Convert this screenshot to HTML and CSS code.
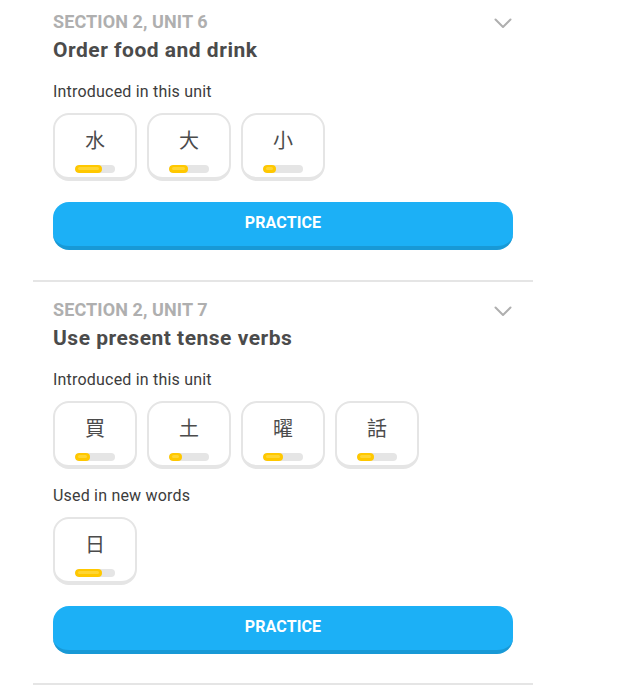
FILE: index.html
```html
<!DOCTYPE html>
<html lang="en">
<head>
  <meta charset="UTF-8" />
  <meta name="viewport" content="width=device-width, initial-scale=1.0" />
  <title>Guidebook</title>
  <link rel="stylesheet" href="styles.css">
</head>
<body>
  <main class="units">
    <section class="unit">
      <div class="unit-head">
        <div>
          <div class="unit-label">SECTION 2, UNIT 6</div>
          <h2 class="unit-title">Order food and drink</h2>
        </div>
        <svg class="chevron" width="18" height="12" viewBox="0 0 18 12">
          <path d="M1.5 1.5 L9 9 L16.5 1.5" fill="none" stroke="#afafaf" stroke-width="2" stroke-linecap="round" stroke-linejoin="round"/>
        </svg>
      </div>

      <p class="group-title">Introduced in this unit</p>
      <div class="tiles">
        <div class="tile">
          <span class="char">水</span>
          <div class="bar"><div class="fill" style="width: 67.5%;"></div></div>
        </div>
        <div class="tile">
          <span class="char">大</span>
          <div class="bar"><div class="fill" style="width: 47.5%;"></div></div>
        </div>
        <div class="tile">
          <span class="char">小</span>
          <div class="bar"><div class="fill" style="width: 32.5%;"></div></div>
        </div>
      </div>

      <button class="practice-btn">PRACTICE</button>
    </section>

    <section class="unit">
      <div class="unit-head">
        <div>
          <div class="unit-label">SECTION 2, UNIT 7</div>
          <h2 class="unit-title">Use present tense verbs</h2>
        </div>
        <svg class="chevron" width="18" height="12" viewBox="0 0 18 12">
          <path d="M1.5 1.5 L9 9 L16.5 1.5" fill="none" stroke="#afafaf" stroke-width="2" stroke-linecap="round" stroke-linejoin="round"/>
        </svg>
      </div>

      <p class="group-title">Introduced in this unit</p>
      <div class="tiles">
        <div class="tile">
          <span class="char">買</span>
          <div class="bar"><div class="fill" style="width: 37.5%;"></div></div>
        </div>
        <div class="tile">
          <span class="char">土</span>
          <div class="bar"><div class="fill" style="width: 32.5%;"></div></div>
        </div>
        <div class="tile">
          <span class="char">曜</span>
          <div class="bar"><div class="fill" style="width: 50%;"></div></div>
        </div>
        <div class="tile">
          <span class="char">話</span>
          <div class="bar"><div class="fill" style="width: 42.5%;"></div></div>
        </div>
      </div>

      <p class="group-title group-title-next">Used in new words</p>
      <div class="tiles">
        <div class="tile">
          <span class="char">日</span>
          <div class="bar"><div class="fill" style="width: 67.5%;"></div></div>
        </div>
      </div>

      <button class="practice-btn">PRACTICE</button>
    </section>
  </main>
</body>
</html>
```

FILE: styles.css
```css
body {
  margin: 0;
  padding: 0;
  background: #fff;
  font-family: Roboto, "Noto Sans CJK TC", sans-serif;
  color: #4b4b4b;
}
.units {
  width: 500px;
  margin: -6px 0 0 33px;
}
.unit {
  padding: 17px 20px 30px;
  border-bottom: 2px solid #e5e5e5;
}
.unit + .unit {
  padding-bottom: 29px;
}
.unit-head {
  display: flex;
  justify-content: space-between;
  align-items: flex-start;
}
.unit-label {
  font-size: 18px;
  line-height: 22px;
  font-weight: 700;
  letter-spacing: 0.1px;
  color: #afafaf;
}
.unit-title {
  margin: 4px 0 0;
  font-size: 21px;
  line-height: 26px;
  font-weight: 700;
  letter-spacing: 0.5px;
  color: #4b4b4b;
}
.chevron {
  margin: 7px 1px 0 0;
}
.group-title {
  margin: 19px 0 0;
  font-size: 16px;
  line-height: 20px;
  letter-spacing: 0.2px;
  color: #3c3c3c;
}
.group-title-next {
  margin-top: 17px;
}
.tiles {
  display: flex;
  gap: 10px;
  margin-top: 11px;
}
.tile {
  width: 80px;
  height: 62px;
  border: 2px solid #e5e5e5;
  border-bottom-width: 4px;
  border-radius: 16px;
  display: flex;
  flex-direction: column;
  align-items: center;
  box-sizing: content-box;
}
.char {
  margin-top: 13px;
  font-family: "Noto Sans CJK TC", sans-serif;
  font-size: 20px;
  line-height: 24px;
  color: #4b4b4b;
}
.bar {
  margin-top: 13px;
  width: 40px;
  height: 8px;
  border-radius: 4px;
  background: #e5e5e5;
  overflow: hidden;
}
.fill {
  position: relative;
  height: 100%;
  border-radius: 4px;
  background: #ffc800;
}
.fill::after {
  content: "";
  position: absolute;
  left: 3px;
  right: 3px;
  top: 2px;
  height: 3px;
  border-radius: 2px;
  background: #ffd633;
}
.practice-btn {
  display: block;
  width: 100%;
  height: 48px;
  margin-top: 21px;
  padding: 0 0 3px;
  border: none;
  border-bottom: 4px solid #1899d6;
  border-radius: 16px;
  background: #1cb0f6;
  color: #fff;
  font-family: Roboto, sans-serif;
  font-size: 16px;
  font-weight: 700;
  letter-spacing: 0.1px;
  cursor: pointer;
}
```
